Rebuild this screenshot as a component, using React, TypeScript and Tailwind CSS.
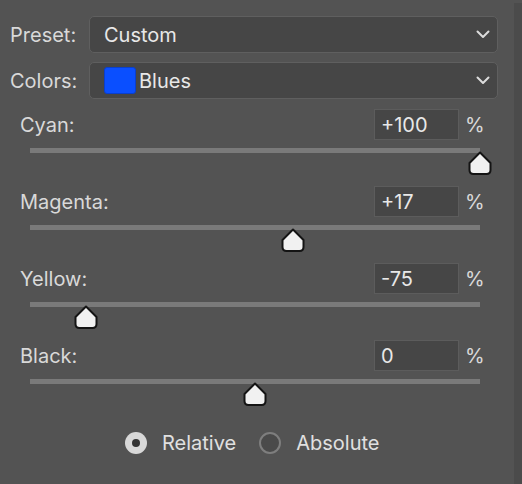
const font = { fontFamily: "Inter, 'Liberation Sans', sans-serif" };

interface Channel {
  name: string;
  value: number;
}

const channels: Channel[] = [
  { name: "Cyan", value: 100 },
  { name: "Magenta", value: 17 },
  { name: "Yellow", value: -75 },
  { name: "Black", value: 0 },
];

const Chevron = () => (
  <svg width="14" height="9" viewBox="0 0 14 9" fill="none">
    <path d="M1.5 1.5 L7 7 L12.5 1.5" stroke="#dcdcdc" strokeWidth="2" strokeLinecap="round" strokeLinejoin="round" />
  </svg>
);

const Thumb = () => (
  <svg width="26" height="25" viewBox="0 0 26 25">
    <path
      d="M13 1.5 L23.5 12 L23.5 19 Q23.5 23 19.5 23 L6.5 23 Q2.5 23 2.5 19 L2.5 12 Z"
      fill="#f1f1f1"
      stroke="#141414"
      strokeWidth="2"
      strokeLinejoin="round"
    />
  </svg>
);

const fmt = (v: number) => (v > 0 ? `+${v}` : `${v}`);

const SliderRow = ({ name, value }: Channel) => {
  const pct = (value + 100) / 200;
  return (
    <div className="flex flex-col">
      <div className="flex items-center h-[31px]">
        <span className="text-[20px] text-[#d9d9d9] w-[354px]">{name}:</span>
        <div className="w-[85px] h-[31px] bg-[#464646] border border-[#5c5c5c] flex items-center pl-[6px] text-[20px] text-[#e8e8e8]">
          {fmt(value)}
        </div>
        <span className="ml-[6px] text-[20px] text-[#d9d9d9]">%</span>
      </div>
      <div className="relative ml-[10px] mt-[8px] w-[450px] h-[5px] bg-[#7a7a7a]">
        <div className="absolute top-[3px]" style={{ left: `${pct * 450 - 13}px` }}>
          <Thumb />
        </div>
      </div>
      <div className="h-[33px]" />
    </div>
  );
};

const App = () => {
  return (
    <div className="flex w-[522px] h-[484px] bg-[#535353]" style={font}>
      <div className="flex-1 flex flex-col pt-[16px]">
        {/* Preset */}
        <div className="flex items-center">
          <span className="w-[89px] pl-[10px] text-[20px] text-[#d9d9d9]">Preset:</span>
          <div className="w-[409px] h-[37px] rounded-[5px] bg-[#464646] border border-[#5f5f5f] flex items-center justify-between pl-[14px] pr-[7px]">
            <span className="text-[20px] text-[#e8e8e8]">Custom</span>
            <Chevron />
          </div>
        </div>

        {/* Colors */}
        <div className="flex items-center mt-[9px]">
          <span className="w-[89px] pl-[10px] text-[20px] text-[#d9d9d9]">Colors:</span>
          <div className="w-[409px] h-[37px] rounded-[5px] bg-[#464646] border border-[#5f5f5f] flex items-center justify-between pl-[14px] pr-[7px]">
            <div className="flex items-center gap-[3px]">
              <div className="w-[32px] h-[27px] rounded-[3px] bg-[#0a4fff] border border-[#0a3fcc]" />
              <span className="text-[20px] text-[#e8e8e8]">Blues</span>
            </div>
            <Chevron />
          </div>
        </div>

        {/* Sliders */}
        <div className="flex flex-col pl-[20px] mt-[10px]">
          {channels.map((c) => (
            <SliderRow key={c.name} name={c.name} value={c.value} />
          ))}
        </div>

        {/* Mode */}
        <div className="flex items-center mt-[11px] pl-[125px]">
          <div className="w-[22px] h-[22px] rounded-full bg-[#d8d8d8] flex items-center justify-center">
            <div className="w-[8px] h-[8px] rounded-full bg-[#333333]" />
          </div>
          <span className="ml-[15px] text-[20px] text-[#e0e0e0]">Relative</span>
          <div className="ml-[23px] w-[22px] h-[22px] rounded-full bg-[#4a4a4a] border-2 border-[#7e7e7e]" />
          <span className="ml-[15px] text-[20px] text-[#e0e0e0]">Absolute</span>
        </div>
      </div>
      <div className="w-[8px] mt-[3px] bg-[#4b4b4b]" />
    </div>
  );
};

export default App;
